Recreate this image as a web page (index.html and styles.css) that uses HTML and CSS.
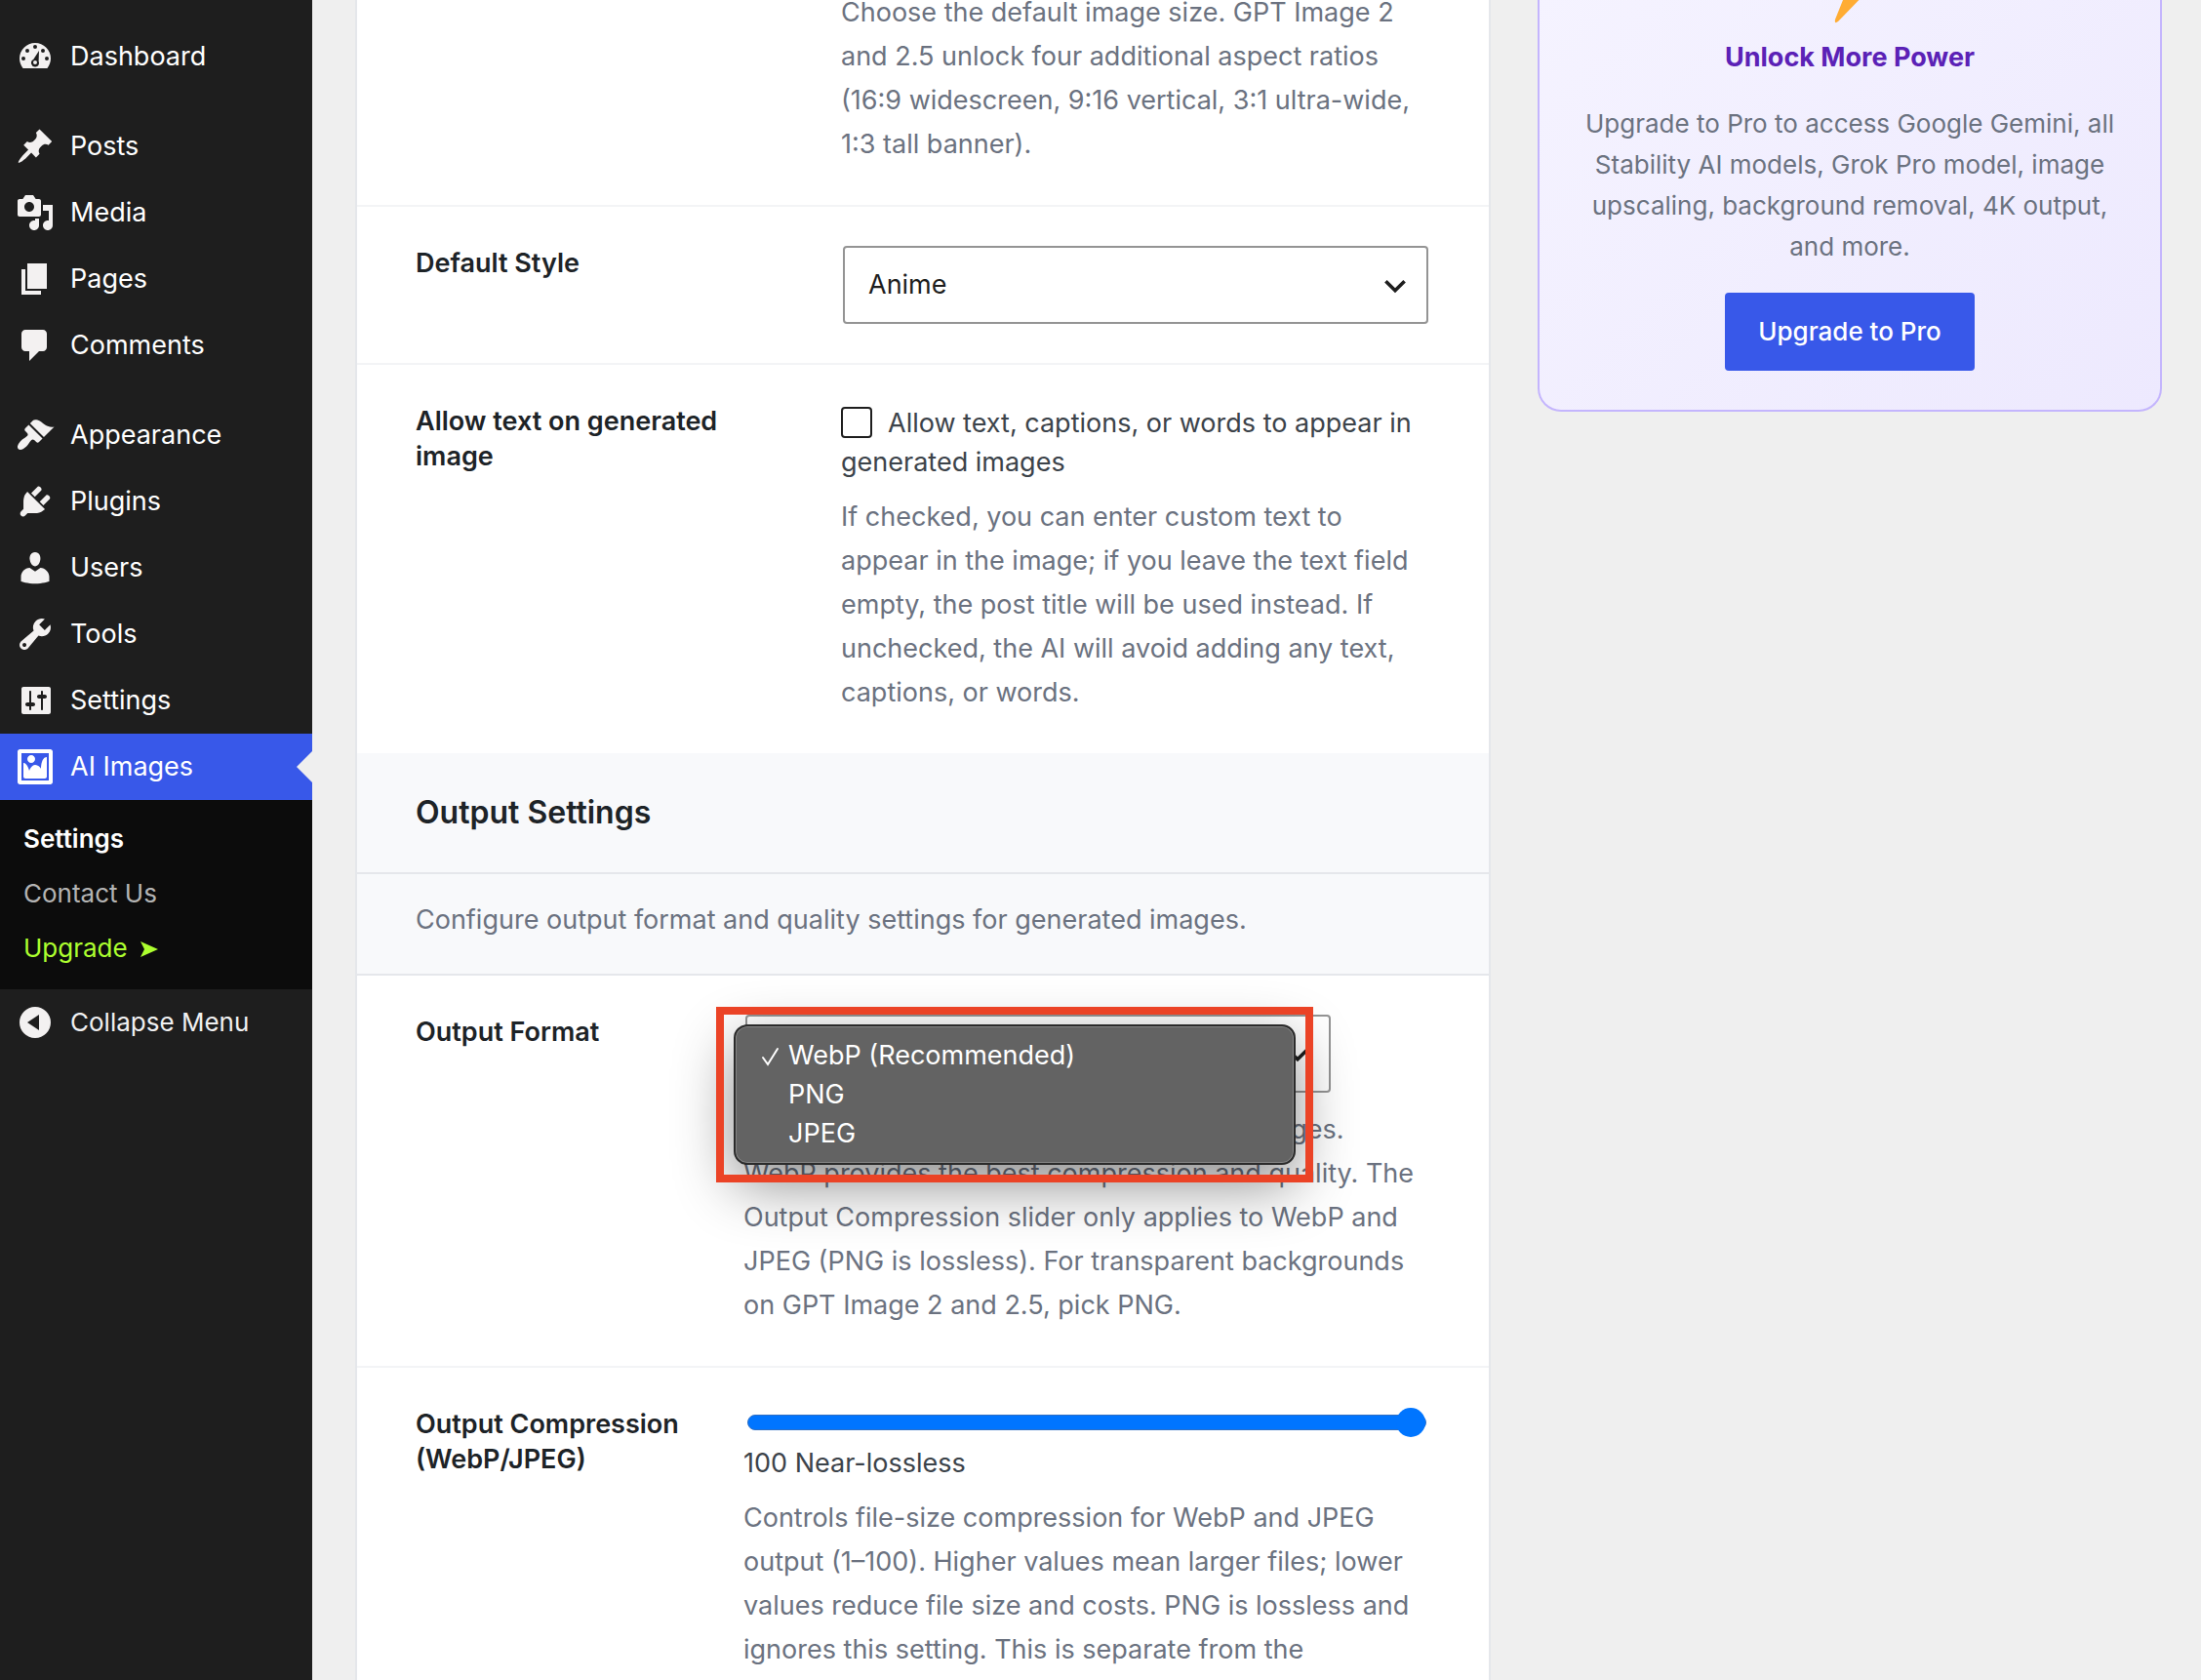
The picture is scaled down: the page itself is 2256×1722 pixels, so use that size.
FILE: index.html
```html
<!DOCTYPE html>
<html lang="en">
<head>
    <meta charset="UTF-8">
    <title>AI Images Settings</title>
    <link rel="stylesheet" href="styles.css">
</head>
<body>
    <nav class="admin-menu">
        <ul class="menu-group">
            <li><a href="#"><svg viewBox="0 0 20 20"><path fill-rule="evenodd" d="M3.8 16h12.4C17.3 14.6 18 12.9 18 11a8 8 0 0 0-16 0c0 1.9.7 3.6 1.8 5zM10 4a1 1 0 1 1 0 2 1 1 0 0 1 0-2zM6 6a1 1 0 1 1 0 2 1 1 0 0 1 0-2zM14 6a1 1 0 1 1 0 2 1 1 0 0 1 0-2zM4 10a1 1 0 1 1 0 2 1 1 0 0 1 0-2zM16 10a1 1 0 1 1 0 2 1 1 0 0 1 0-2zM12 7l-.2 5.5c.2.3.2.6.2.8a2 2 0 1 1-2.9-1.8L12 7zM10 12a1 1 0 1 0 0 2 1 1 0 0 0 0-2z"/></svg>Dashboard</a></li>
        </ul>
        <ul class="menu-group">
            <li><a href="#"><svg viewBox="0 0 20 20"><path d="M10.44 3.02l1.82-1.82 6.36 6.35-1.83 1.82c-1.05-.68-2.48-.57-3.41.36l-.75.75c-.92.93-1.04 2.35-.35 3.41l-1.83 1.82-2.41-2.41-2.8 2.79c-.42.42-3.38 2.71-3.8 2.29s1.86-3.39 2.28-3.81l2.79-2.79L4.1 9.36l1.83-1.82c1.05.69 2.48.57 3.4-.36l.75-.75c.93-.92 1.05-2.35.36-3.41z"/></svg>Posts</a></li>
            <li><a href="#"><svg viewBox="0 0 20 20"><path fill-rule="evenodd" d="M13 11V4c0-.55-.45-1-1-1h-1.67L9 1H5L3.67 3H2c-.55 0-1 .45-1 1v7c0 .55.45 1 1 1h10c.55 0 1-.45 1-1zM7 4.5c1.38 0 2.5 1.12 2.5 2.5S8.38 9.5 7 9.5 4.5 8.38 4.5 7 5.62 4.5 7 4.5zM14 6h5v10.5c0 1.38-1.12 2.5-2.5 2.5S14 17.88 14 16.5s1.12-2.5 2.5-2.5c.17 0 .34.02.5.05V9h-3V6zm-4 8.05V13h2v3.5c0 1.38-1.12 2.5-2.5 2.5S7 17.88 7 16.5 8.12 14 9.5 14c.17 0 .34.02.5.05z"/></svg>Media</a></li>
            <li><a href="#"><svg viewBox="0 0 20 20"><path d="M6 15V2h10v13H6zm-1 1h8v2H3V5h2v11z"/></svg>Pages</a></li>
            <li><a href="#"><svg viewBox="0 0 20 20"><path d="M5 2h9c1.1 0 2 .9 2 2v7c0 1.1-.9 2-2 2h-2l-5 5v-5H5c-1.1 0-2-.9-2-2V4c0-1.1.9-2 2-2z"/></svg>Comments</a></li>
        </ul>
        <ul class="menu-group">
            <li><a href="#"><svg viewBox="0 0 20 20"><path d="M14.48 11.06L7.41 3.99l1.5-1.5c.5-.56 2.3-.47 3.51.32 1.21.8 1.43 1.28 2.91 2.1 1.18.64 2.45 1.26 4.45.85zm-.71.71L6.7 4.7 4.93 6.47c-.39.39-.39 1.02 0 1.41l1.06 1.06c.39.39.39 1.03 0 1.42-.6.6-1.43 1.11-2.21 1.69-.35.26-.7.53-1.01.84C1.43 14.23.4 16.08 1.4 17.07c.99 1 2.84-.03 4.18-1.36.31-.31.58-.66.85-1.02.57-.78 1.08-1.61 1.69-2.21.39-.39 1.02-.39 1.41 0l1.06 1.06c.39.39 1.02.39 1.41 0z"/></svg>Appearance</a></li>
            <li><a href="#"><svg viewBox="0 0 20 20"><path d="M13.11 4.36L9.87 7.6 8 5.73l3.24-3.24c.35-.34 1.05-.2 1.56.32.52.51.66 1.21.31 1.55zm-8 1.77l.91-1.12 9.01 9.01-1.19.84c-.71.71-2.63 1.16-3.82 1.16H6.14L4.9 17.26c-.59.59-1.54.59-2.12 0-.59-.58-.59-1.53 0-2.12l1.24-1.24v-3.88c0-1.13.4-3.19 1.09-3.89zm7.26 3.97l3.24-3.24c.34-.35 1.04-.21 1.55.31.52.51.66 1.21.31 1.55l-3.24 3.25z"/></svg>Plugins</a></li>
            <li><a href="#"><svg viewBox="0 0 20 20"><path d="M10 9.25c-2.27 0-2.73-3.44-2.73-3.44C7 4.02 7.82 2 9.97 2c2.16 0 2.98 2.02 2.71 3.81 0 0-.41 3.44-2.68 3.44zm0 2.57L12.72 10c2.39 0 4.52 2.33 4.52 4.53v2.49s-3.65 1.13-7.24 1.13c-3.65 0-7.24-1.13-7.24-1.13v-2.49c0-2.25 1.94-4.48 4.47-4.48z"/></svg>Users</a></li>
            <li><a href="#"><svg viewBox="0 0 20 20"><path fill-rule="evenodd" d="M16.68 9.77c-1.34 1.34-3.3 1.67-4.95.99l-5.41 6.52c-.99.99-2.59.99-3.58 0s-.99-2.59 0-3.57l6.52-5.42c-.68-1.65-.35-3.61.99-4.95 1.28-1.28 3.12-1.62 4.72-1.06l-2.89 2.89 2.82 2.82 2.86-2.87c.53 1.58.18 3.39-1.08 4.65zM3.81 16.21c.4.39 1.04.39 1.43 0 .4-.4.4-1.04 0-1.43-.39-.4-1.03-.4-1.43 0-.39.39-.39 1.03 0 1.43z"/></svg>Tools</a></li>
            <li><a href="#"><svg viewBox="0 0 20 20"><path fill-rule="evenodd" d="M18 16V4c0-.55-.45-1-1-1H4c-.55 0-1 .45-1 1v12c0 .55.45 1 1 1h13c.55 0 1-.45 1-1zM8 11h1c.55 0 1 .45 1 1s-.45 1-1 1H8v1.5c0 .28-.22.5-.5.5s-.5-.22-.5-.5V13H6c-.55 0-1-.45-1-1s.45-1 1-1h1V5.5c0-.28.22-.5.5-.5s.5.22.5.5V11zm5-2h-1c-.55 0-1-.45-1-1s.45-1 1-1h1V5.5c0-.28.22-.5.5-.5s.5.22.5.5V7h1c.55 0 1 .45 1 1s-.45 1-1 1h-1v5.5c0 .28-.22.5-.5.5s-.5-.22-.5-.5V9z"/></svg>Settings</a></li>
            <li class="current"><a href="#"><svg viewBox="0 0 20 20"><path fill-rule="evenodd" d="M2.25 1h15.5c.69 0 1.25.56 1.25 1.25v15.5c0 .69-.56 1.25-1.25 1.25H2.25C1.56 19 1 18.44 1 17.75V2.25C1 1.56 1.56 1 2.25 1zM17 17V3H3v14h14zM10 6c0-1.1-.9-2-2-2s-2 .9-2 2 .9 2 2 2 2-.9 2-2zm3 5s0-6 3-6v10c0 .55-.45 1-1 1H5c-.55 0-1-.45-1-1V8c2 0 3 4 3 4s1-3 3-3 3 2 3 2z"/></svg>AI Images</a></li>
        </ul>
        <ul class="submenu">
            <li><a href="#" class="active">Settings</a></li>
            <li><a href="#">Contact Us</a></li>
            <li><a href="#" class="upgrade">Upgrade <svg viewBox="0 0 18 16"><path d="M0 0l18 8L0 16l4-8z"/></svg></a></li>
        </ul>
        <button type="button" class="collapse"><svg viewBox="0 0 20 20"><path fill-rule="evenodd" d="M10 2a8 8 0 1 1 0 16 8 8 0 0 1 0-16zM12 6l-6 4 6 4z"/></svg>Collapse Menu</button>
    </nav>

    <main class="content">
        <form class="settings-card">
            <div class="row">
                <div class="field">
                    <p class="description">Choose the default image size. GPT Image 2 and 2.5 unlock four additional aspect ratios (16:9 widescreen, 9:16 vertical, 3:1 ultra-wide, 1:3 tall banner).</p>
                </div>
            </div>
            <div class="row">
                <label class="row-label" for="default-style">Default Style</label>
                <div class="field">
                    <div class="select-wrap">
                        <select id="default-style">
                            <option selected>Anime</option>
                        </select>
                        <svg class="chevron" viewBox="0 0 20 20"><path d="M2 6l8 8 8-8"/></svg>
                    </div>
                </div>
            </div>
            <div class="row">
                <span class="row-label">Allow text on generated image</span>
                <div class="field">
                    <label class="check-label" for="allow-text"><input type="checkbox" id="allow-text">Allow text, captions, or words to appear in generated images</label>
                    <p class="description">If checked, you can enter custom text to appear in the image; if you leave the text field empty, the post title will be used instead. If unchecked, the AI will avoid adding any text, captions, or words.</p>
                </div>
            </div>

            <h2 class="section-title">Output Settings</h2>
            <p class="section-intro">Configure output format and quality settings for generated images.</p>

            <div class="row output-row">
                <label class="row-label" for="output-format">Output Format</label>
                <div class="field">
                    <div class="select-wrap">
                        <select id="output-format">
                            <option selected>WebP (Recommended)</option>
                            <option>PNG</option>
                            <option>JPEG</option>
                        </select>
                        <svg class="chevron" viewBox="0 0 20 20"><path d="M2 6l8 8 8-8"/></svg>
                        <ul class="dropdown">
                            <li><svg viewBox="0 0 20 20"><path d="M2 11l5 7L17 2"/></svg>WebP (Recommended)</li>
                            <li>PNG</li>
                            <li>JPEG</li>
                        </ul>
                        <div class="highlight"></div>
                    </div>
                    <p class="description">Choose the output format for generated images. WebP provides the best compression and quality. The Output Compression slider only applies to WebP and JPEG (PNG is lossless). For transparent backgrounds on GPT Image 2 and 2.5, pick PNG.</p>
                </div>
            </div>
            <div class="row output-row">
                <label class="row-label" for="compression">Output Compression (WebP/JPEG)</label>
                <div class="field">
                    <input type="range" id="compression" min="1" max="100" value="100">
                    <output class="range-value" for="compression">100 Near-lossless</output>
                    <p class="description">Controls file-size compression for WebP and JPEG output (1–100). Higher values mean larger files; lower values reduce file size and costs. PNG is lossless and ignores this setting. This is separate from the</p>
                </div>
            </div>
        </form>

        <aside class="upsell">
            <svg class="bolt" viewBox="0 0 40 34"><path d="M17 0h22L8 32q-4 3-3-2z"/></svg>
            <h3>Unlock More Power</h3>
            <p>Upgrade to Pro to access Google Gemini, all Stability AI models, Grok Pro model, image upscaling, background removal, 4K output, and more.</p>
            <a href="#" class="btn">Upgrade to Pro</a>
        </aside>
    </main>
</body>
</html>
```

FILE: styles.css
```css
* {
    margin: 0;
    padding: 0;
    box-sizing: border-box;
}

body {
    display: flex;
    height: 100vh;
    overflow: hidden;
    background: #efefef;
    color: #3c434a;
    font-family: Inter, sans-serif;
    font-size: 27px;
    line-height: 40px;
}

ul {
    list-style: none;
}

a {
    text-decoration: none;
}

/* Sidebar */
.admin-menu {
    flex: 0 0 320px;
    padding-top: 24px;
    background: #1e1e1e;
}

.menu-group {
    margin-bottom: 24px;
}

.menu-group:nth-of-type(3) {
    margin-bottom: 0;
}

.menu-group a,
.collapse {
    display: flex;
    align-items: center;
    gap: 16px;
    height: 68px;
    padding-left: 16px;
    color: #fff;
}

.menu-group svg,
.collapse svg {
    width: 40px;
    height: 40px;
    fill: #f3f1f1;
}

.current {
    position: relative;
    background: #3858e9;
}

.menu-group .current svg {
    fill: #fff;
}

.current::after {
    content: "";
    position: absolute;
    right: 0;
    top: 18px;
    border: 16px solid transparent;
    border-left: 0;
    border-right-color: #efefef;
}

.submenu {
    padding: 12px 24px 14px;
    background: #0c0c0c;
    font-size: 26px;
    line-height: 56px;
}

.submenu a {
    display: block;
    color: #b4b4b4;
}

.submenu .active {
    color: #fff;
    font-weight: 600;
}

.submenu .upgrade {
    color: #adff2f;
}

.upgrade svg {
    width: 18px;
    height: 16px;
    margin-left: 6px;
    fill: #adff2f;
}

.collapse {
    width: 100%;
    border: 0;
    background: none;
    color: #f0f0f1;
    font: inherit;
    font-size: 26px;
}

/* Settings */
.content {
    flex: 1;
    display: flex;
    gap: 48px;
    margin-top: -10px;
    padding: 0 40px 0 44px;
}

.settings-card {
    flex: 1;
    border: 2px solid #e5e7eb;
    border-width: 0 2px;
    background: #fff;
}

.row {
    display: flex;
    justify-content: flex-end;
    padding: 40px 60px;
    border-bottom: 2px solid #f3f4f6;
}

.row:first-child {
    padding-top: 0;
}

.row:nth-child(3),
.row:last-child {
    border-bottom: 0;
}

.row-label {
    flex: 1;
    padding-right: 60px;
    color: #1d2327;
    font-weight: 600;
    line-height: 36px;
}

.field {
    flex: 0 0 604px;
}

.output-row .row-label {
    padding-right: 0;
}

.output-row .field {
    flex-basis: 704px;
}

.description {
    color: #6b7280;
    line-height: 45px;
}

.output-row .description {
    max-width: 692px;
}

.select-wrap {
    position: relative;
    width: 600px;
    margin: 0 2px;
}

select {
    display: block;
    width: 100%;
    height: 80px;
    padding: 0 24px;
    border: 2px solid #949494;
    border-radius: 4px;
    background: #fff;
    color: #1e1e1e;
    font: inherit;
    appearance: none;
}

.chevron {
    position: absolute;
    right: 22px;
    top: 29px;
    width: 24px;
    height: 24px;
    fill: none;
    stroke: #1e1e1e;
    stroke-width: 3;
}

.select-wrap + .description {
    margin-top: 15px;
}

.check-label {
    display: block;
}

.check-label input {
    width: 32px;
    height: 32px;
    margin-right: 16px;
    border: 2px solid #1e1e1e;
    border-radius: 4px;
    background: #fff;
    vertical-align: -6px;
    appearance: none;
}

.check-label + .description,
.range-value + .description {
    margin-top: 13px;
}

.section-title {
    padding: 41px 60px;
    border-bottom: 2px solid #e5e7eb;
    background: #f8f9fb;
    color: #1d2327;
    font-size: 32px;
    font-weight: 600;
}

.section-intro {
    padding: 24px 60px 33px;
    border-bottom: 2px solid #e5e7eb;
    background: #f8f9fb;
    color: #6b7280;
    line-height: 45px;
}

/* Opened format list */
.dropdown {
    position: absolute;
    left: -12px;
    top: 10px;
    width: 576px;
    padding: 10px 0;
    border: 2px solid #2b2b2b;
    border-radius: 14px;
    background: #636363;
    box-shadow: inset 0 0 0 1px #858585, 0 20px 60px rgba(0, 0, 0, 0.45);
    color: #fff;
}

.dropdown li {
    position: relative;
    padding-left: 54px;
}

.dropdown svg {
    position: absolute;
    left: 26px;
    top: 11px;
    width: 20px;
    height: 20px;
    fill: none;
    stroke: #fff;
    stroke-width: 2;
    stroke-linecap: round;
}

.highlight {
    position: absolute;
    left: -30px;
    top: -8px;
    width: 612px;
    height: 180px;
    border: 8px solid #eb4326;
}

input[type="range"] {
    display: block;
    width: 696px;
    height: 32px;
    margin: 0 4px 6px;
    background: none;
    appearance: none;
}

input[type="range"]::-webkit-slider-runnable-track {
    height: 16px;
    border: 1px solid #2f6fc4;
    border-radius: 8px;
    background: #0075ff;
}

input[type="range"]::-webkit-slider-thumb {
    width: 30px;
    height: 30px;
    margin-top: -8px;
    border-radius: 50%;
    background: #0075ff;
    appearance: none;
}

.range-value {
    display: block;
}

/* Pro box */
.upsell {
    flex: 0 0 640px;
    align-self: flex-start;
    padding: 0 46px 40px;
    border: 2px solid #c4b5fd;
    border-top: 0;
    border-radius: 0 0 24px 24px;
    background: linear-gradient(135deg, #f5f3ff, #ede9fe);
    text-align: center;
}

.bolt {
    display: block;
    width: 40px;
    height: 34px;
    margin: 0 auto;
    fill: #ffac33;
}

.upsell h3 {
    margin: 15px 0 27px;
    color: #5b21b6;
    font-size: 27px;
    font-weight: 700;
}

.upsell p {
    margin-bottom: 26px;
    color: #6b7280;
    font-size: 26px;
    line-height: 42px;
}

.btn {
    display: inline-block;
    padding: 20px 34px;
    border-radius: 4px;
    background: #3858e9;
    color: #fff;
    font-size: 26px;
    font-weight: 500;
    vertical-align: top;
}
```
